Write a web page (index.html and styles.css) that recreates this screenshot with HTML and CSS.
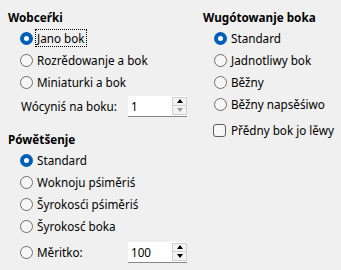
FILE: index.html
```html
<!DOCTYPE html>
<html>
<head>
<meta charset="utf-8">
<link rel="stylesheet" href="styles.css">
</head>
<body>
<div class="dialog">
  <div class="col left">
    <div class="title">Wobceŕki</div>
    <div class="group">
      <div class="row"><span class="radio on"></span><span class="lbl focus">Jano bok</span></div>
      <div class="row"><span class="radio"></span><span class="lbl">Rozrědowanje a bok</span></div>
      <div class="row"><span class="radio"></span><span class="lbl">Miniaturki a bok</span></div>
    </div>
    <div class="spinrow first">
      <span class="plain">Wócyniś na boku:</span>
      <div class="spin">
        <span class="val">1</span>
        <div class="btns">
          <span class="btn"><span class="up"></span></span>
          <span class="btn"><span class="down dis"></span></span>
        </div>
      </div>
    </div>
    <div class="title second">Pówětšenje</div>
    <div class="group">
      <div class="row"><span class="radio on"></span><span class="lbl">Standard</span></div>
      <div class="row"><span class="radio"></span><span class="lbl">Woknoju pśiměriś</span></div>
      <div class="row"><span class="radio"></span><span class="lbl">Šyrokosći pśiměriś</span></div>
      <div class="row"><span class="radio"></span><span class="lbl">Šyrokosć boka</span></div>
      <div class="row spinrow last">
        <span class="radio"></span><span class="lbl">Měritko:</span>
        <div class="spin">
          <span class="val">100</span>
          <div class="btns">
            <span class="btn"><span class="up"></span></span>
            <span class="btn"><span class="down"></span></span>
          </div>
        </div>
      </div>
    </div>
  </div>
  <div class="col right">
    <div class="title">Wugótowanje boka</div>
    <div class="group">
      <div class="row"><span class="radio on"></span><span class="lbl">Standard</span></div>
      <div class="row"><span class="radio"></span><span class="lbl">Jadnotliwy bok</span></div>
      <div class="row"><span class="radio"></span><span class="lbl">Běžny</span></div>
      <div class="row"><span class="radio"></span><span class="lbl">Běžny napsěśiwo</span></div>
      <div class="row check-row"><span class="check"></span><span class="lbl">Přědny bok jo lěwy</span></div>
    </div>
  </div>
</div>
</body>
</html>
```

FILE: styles.css
```css
html, body {
  margin: 0;
  padding: 0;
  background: #f0f0f0;
}
body {
  width: 341px;
  height: 270px;
  overflow: hidden;
  font-family: "Noto Sans", "Open Sans", sans-serif;
  font-size: 11.7px;
  color: #000;
}
.dialog {
  display: flex;
  padding: 8px 0 0 8px;
}
.col.left {
  width: 195px;
  display: flex;
  flex-direction: column;
}
.col.right {
  display: flex;
  flex-direction: column;
}
.title {
  font-weight: bold;
  height: 19px;
  line-height: 19px;
}
.title.second {
  margin-top: 12px;
}
.group {
  display: flex;
  flex-direction: column;
  padding-left: 12px;
}
.right .group {
  padding-left: 11px;
}
.row {
  height: 22px;
  display: flex;
  align-items: center;
}
.radio {
  box-sizing: border-box;
  width: 13px;
  height: 13px;
  border-radius: 50%;
  border: 1px solid #6e6e6e;
  background: #f7f7f7;
  flex: none;
}
.radio.on {
  border: 4px solid #005fb8;
  background: #fff;
}
.lbl {
  margin-left: 2px;
  padding: 0 1px;
  border: 1px dotted transparent;
  line-height: 16px;
}
.lbl.focus {
  border-color: #000;
}
.check-row {
  margin-top: 4px;
}
.check {
  box-sizing: border-box;
  width: 13px;
  height: 13px;
  border: 1px solid #5c5c5c;
  border-radius: 3px;
  background: #f7f7f7;
  margin-left: -1px;
  margin-right: 1px;
  flex: none;
}
.spinrow {
  display: flex;
  align-items: center;
  height: 24px;
}
.spinrow.first {
  margin-top: 1px;
  padding-left: 13px;
}
.spinrow .spin {
  margin-left: auto;
  margin-right: 16px;
}
.spinrow.last {
  margin-top: 3px;
  height: 24px;
}
.spin {
  box-sizing: border-box;
  width: 59px;
  height: 21px;
  background: #fff;
  border-bottom: 1px solid #868686;
  display: flex;
  align-items: center;
}
.val {
  padding-left: 3px;
  flex: 1;
}
.btns {
  display: flex;
  flex-direction: column;
  width: 15px;
  height: 18px;
  align-self: flex-start;
  margin-top: 1px;
}
.btn {
  box-sizing: border-box;
  flex: 1;
  border: 1px solid #d0d0d0;
  background: #f3f3f3;
  display: flex;
  align-items: center;
  justify-content: center;
}
.btn + .btn {
  border-top: none;
}
.up {
  width: 0;
  height: 0;
  border-left: 3.5px solid transparent;
  border-right: 3.5px solid transparent;
  border-bottom: 4px solid #000;
}
.down {
  width: 0;
  height: 0;
  border-left: 3.5px solid transparent;
  border-right: 3.5px solid transparent;
  border-top: 4px solid #000;
}
.down.dis {
  border-top-color: #9a9a9a;
}
```
